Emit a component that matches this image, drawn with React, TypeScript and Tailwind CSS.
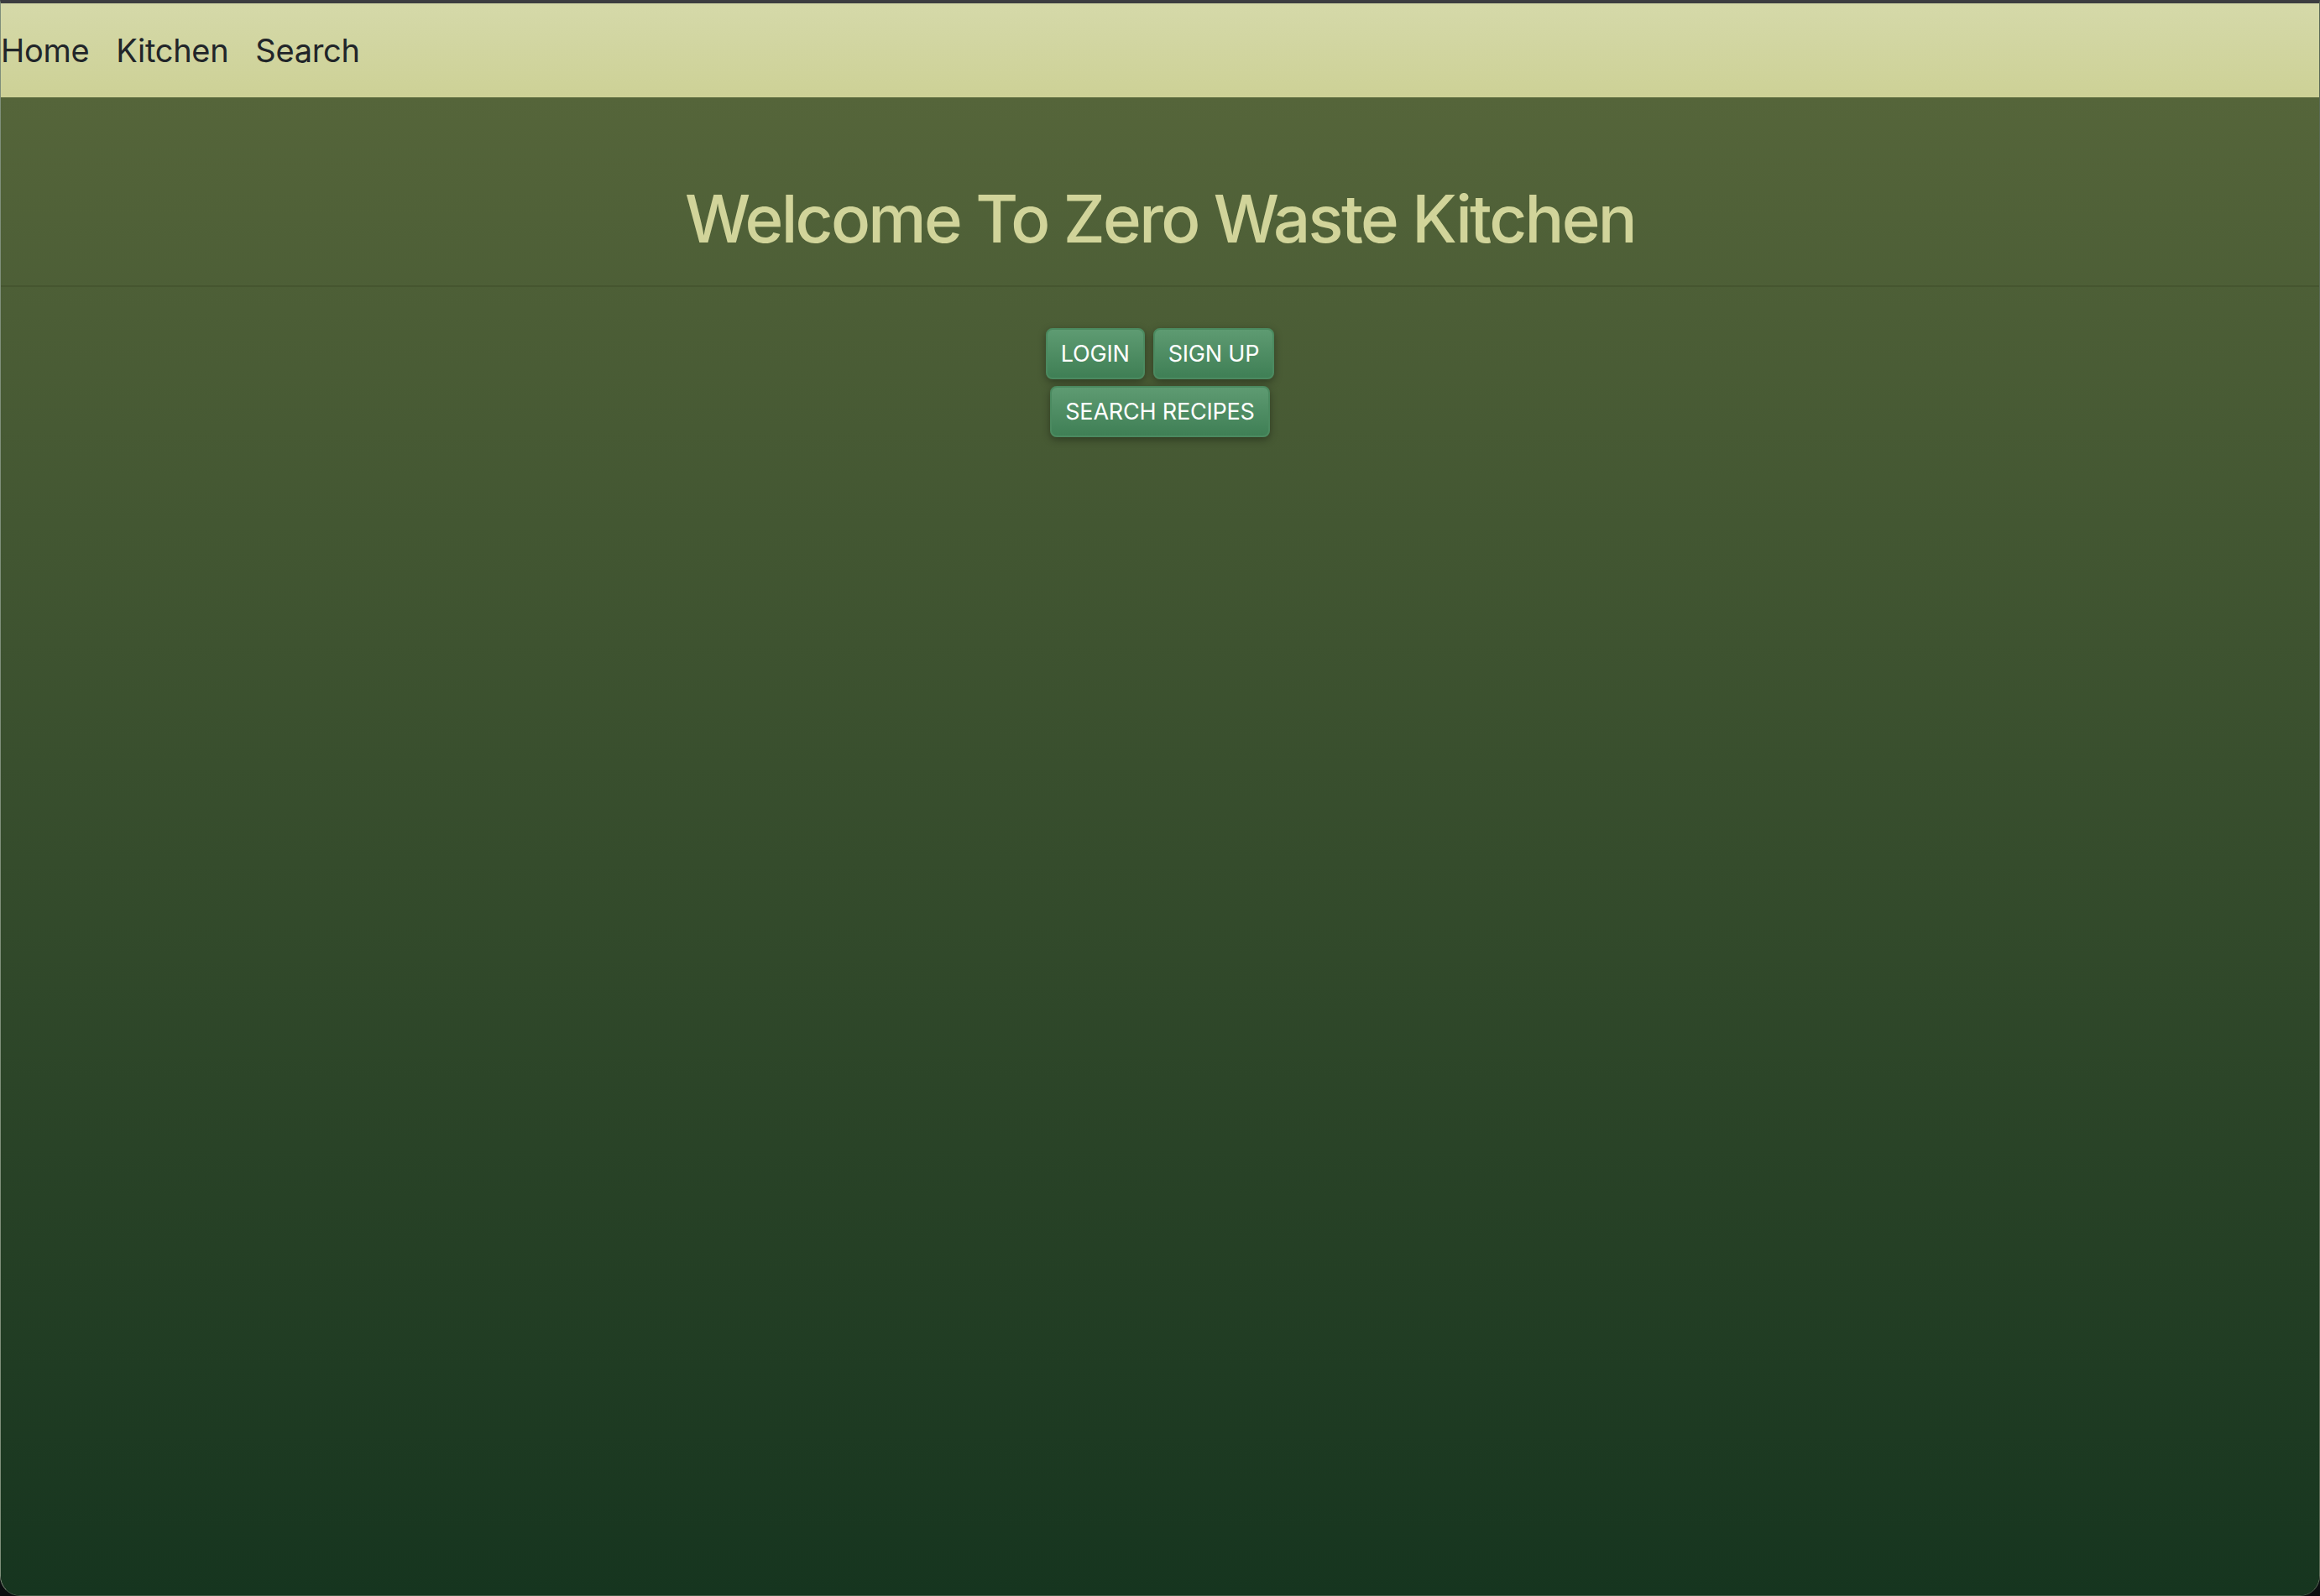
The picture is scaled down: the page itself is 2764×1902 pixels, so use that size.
import React from "react";

const font = { fontFamily: "Inter, 'Noto Sans', 'Liberation Sans', sans-serif" };

function Btn({ children }: { children: React.ReactNode }) {
  return (
    <button className="h-[61px] px-[16px] rounded-[8px] border-2 border-[#4b8a60] bg-gradient-to-b from-[#5e9b72] to-[#3f7f55] text-white text-[27px] tracking-[-0.2px] leading-none shadow-[0_3px_10px_rgba(0,0,0,0.35)]">
      {children}
    </button>
  );
}

export default function App() {
  return (
    <div className="w-full h-[1902px] bg-[#0b0e10]" style={font}>
      <div className="h-full flex flex-col overflow-hidden rounded-b-[24px] border-t-[4px] border-t-[#3c3d40] border-l border-r border-b border-l-[#7f8f7a] border-r-[#5a6a56] border-b-[#3f5a44]">
        <nav className="h-[112px] shrink-0 flex items-center gap-[32px] bg-gradient-to-b from-[#d5d9a9] to-[#cdd196] text-[38px] tracking-[-0.3px] text-[#212529]">
          <span>Home</span>
          <span>Kitchen</span>
          <span>Search</span>
        </nav>
        <main className="flex-1 flex flex-col bg-gradient-to-b from-[#55653a] to-[#16351f]">
          <header className="pt-[97px] pb-[31px] border-b-2 border-[#45552f]">
            <h1 className="text-center text-[78px] leading-[96px] font-medium text-[#d1d49a] tracking-[-2.7px]">
              Welcome To Zero Waste Kitchen
            </h1>
          </header>
          <div className="pt-[49px] flex flex-col items-center gap-[8px]">
            <div className="flex gap-[10px]">
              <Btn>LOGIN</Btn>
              <Btn>SIGN UP</Btn>
            </div>
            <Btn>SEARCH RECIPES</Btn>
          </div>
        </main>
      </div>
    </div>
  );
}
